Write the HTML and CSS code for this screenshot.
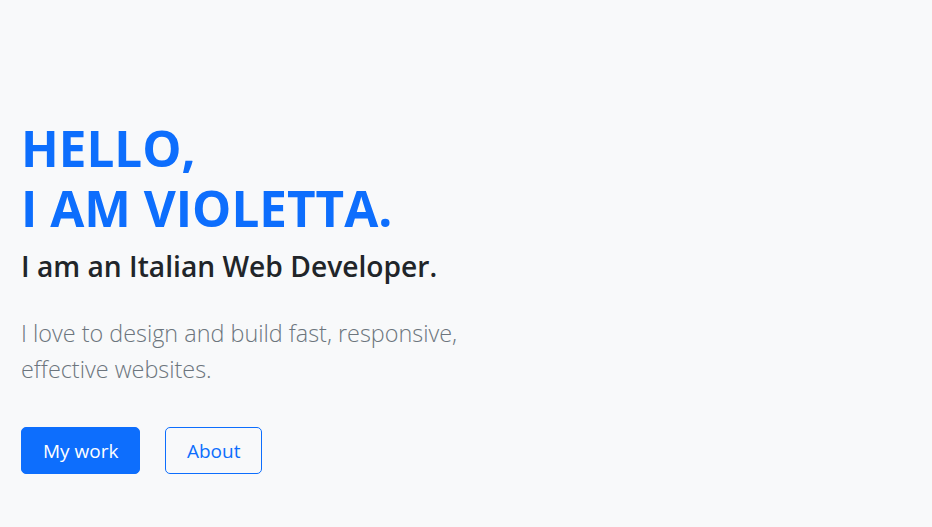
FILE: index.html
```html
<!DOCTYPE html>
<html lang="en">
<head>
<meta charset="utf-8">
<title>Violetta</title>
<link rel="stylesheet" href="styles.css">
</head>
<body>
<main class="hero">
  <h1 class="hero-title">HELLO,<br>I AM VIOLETTA.</h1>
  <h2 class="hero-subtitle">I am an Italian Web Developer.</h2>
  <p class="hero-lead">I love to design and build fast, responsive,<br>effective websites.</p>
  <div class="hero-actions">
    <a class="btn btn-primary" href="#work">My work</a>
    <a class="btn btn-outline" href="#about">About</a>
  </div>
</main>
</body>
</html>
```

FILE: styles.css
```css
html, body {
  margin: 0;
  padding: 0;
  background: #f8f9fa;
  height: 100%;
}
body {
  font-family: "Open Sans", "Noto Sans", sans-serif;
  color: #212529;
}
.hero {
  padding: 118px 21px 0;
}
.hero-title {
  margin: 0;
  color: #0d6efd;
  font-size: 49.4px;
  line-height: 60px;
  font-weight: 700;
}
.hero-subtitle {
  margin: 10px 0 0;
  font-size: 28.2px;
  line-height: 36px;
  font-weight: 600;
  color: #212529;
}
.hero-lead {
  margin: 31px 0 0;
  font-size: 23.4px;
  line-height: 36px;
  font-weight: 300;
  color: #6c757d;
}
.hero-actions {
  display: flex;
  gap: 25px;
  margin-top: 40px;
}
.btn {
  box-sizing: border-box;
  display: inline-flex;
  align-items: center;
  justify-content: center;
  height: 47px;
  padding: 0 21px;
  border-radius: 5px;
  font-size: 19px;
  text-decoration: none;
  border: 1px solid #0d6efd;
}
.btn-primary {
  background: #0d6efd;
  color: #fff;
}
.btn-outline {
  background: transparent;
  color: #0d6efd;
  padding: 0 20.5px;
}
```
